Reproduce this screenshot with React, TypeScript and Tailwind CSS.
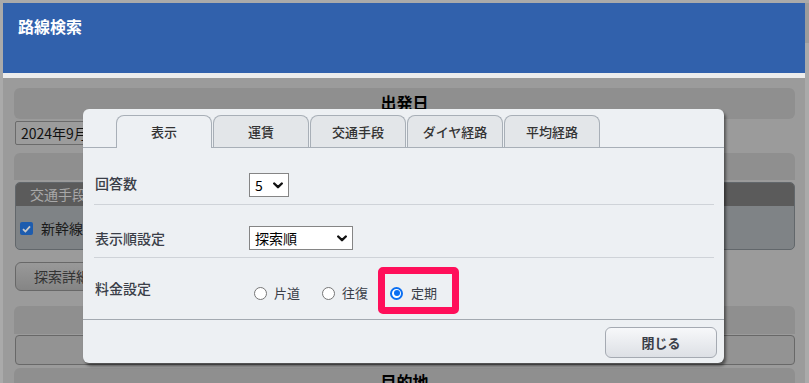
import React from "react";

function Chevron() {
  return (
    <svg width="10" height="7" viewBox="0 0 10 7" className="shrink-0">
      <polyline points="1.2,1.5 5,5.2 8.8,1.5" fill="none" stroke="#111" strokeWidth="2.4" strokeLinecap="round" strokeLinejoin="round" />
    </svg>
  );
}

function Select({ value, w }: { value: string; w: string }) {
  return (
    <div className={`${w} h-[24px] border border-[#858585] bg-white flex items-center justify-between pl-[5px] pr-[5px]`}>
      <span className="text-[14px] leading-none text-black">{value}</span>
      <Chevron />
    </div>
  );
}

function Radio({ checked }: { checked?: boolean }) {
  if (checked) {
    return (
      <span className="w-[13px] h-[13px] rounded-full border-[2px] border-[#0b6ff2] bg-white flex items-center justify-center shrink-0">
        <span className="w-[6px] h-[6px] rounded-full bg-[#0b6ff2]" />
      </span>
    );
  }
  return <span className="w-[13px] h-[13px] rounded-full border border-[#767676] bg-white shrink-0" />;
}

const tabs = ["表示", "運賃", "交通手段", "ダイヤ経路", "平均経路"];

export default function App() {
  return (
    <div className="relative w-[809px] h-[383px] overflow-hidden bg-[#aaaaaa] font-['Noto_Sans_CJK_JP','Noto_Sans',sans-serif] flex items-start">
      <div className="ml-[3px] mt-[3px] w-[802px] flex flex-col shrink-0">
        <div className="h-[70px] shrink-0 bg-[#3161ac] pl-[15px] pt-[11px]">
          <span className="text-white font-bold text-[16px] leading-[22px]">路線検索</span>
        </div>
        <div className="h-[5px] shrink-0 bg-[#ececec]" />
        <div className="h-[320px] shrink-0 bg-[#9b9b9b] pl-[11px] pr-[10px] pt-[10px] flex flex-col">
          <div className="h-[31px] shrink-0 rounded-[6px] bg-[#8f8f8f] flex items-center justify-center pb-[4px]">
            <span className="font-bold text-[16px] text-black">出発日</span>
          </div>
          <div className="mt-[2px] shrink-0 ml-[1px] w-[300px] h-[24px] border border-[#6b6b6b] rounded-[2px] bg-[#9c9c9c] flex items-center pl-[5px]">
            <span className="text-[14px] text-[#111]">2024年9月</span>
          </div>
          <div className="mt-[8px] shrink-0 h-[27px] rounded-t-[6px] bg-[#8f8f8f]" />
          <div className="mt-[2px] shrink-0 ml-[1px] h-[68px] rounded-[5px] border border-[#62676b] bg-[#7f8386] overflow-hidden flex flex-col">
            <div className="h-[23px] shrink-0 bg-[#5b5b5b] flex items-center pl-[14px]">
              <span className="text-[14px] text-[#a8a8a8]">交通手段</span>
            </div>
            <div className="flex items-center pl-[4px] pt-[12px]">
              <span className="w-[13px] h-[13px] rounded-[2px] bg-[#1d5cae] flex items-center justify-center">
                <svg width="9" height="8" viewBox="0 0 9 8">
                  <polyline points="1,4.2 3.4,6.5 8,1.3" fill="none" stroke="#c8c8c8" strokeWidth="1.8" />
                </svg>
              </span>
              <span className="ml-[8px] text-[14px] text-[#1a1a1a]">新幹線</span>
            </div>
          </div>
          <div className="mt-[12px] shrink-0 ml-[1px] w-[120px] h-[29px] rounded-[6px] border border-[#686868] bg-gradient-to-b from-[#999999] to-[#858585] flex items-center pl-[18px]">
            <span className="text-[14px] text-[#333]">探索詳細</span>
          </div>
          <div className="mt-[15px] shrink-0 h-[28px] rounded-t-[6px] bg-[#8f8f8f]" />
          <div className="mt-[1px] shrink-0 ml-[1px] h-[30px] rounded-[4px] border border-[#686868] bg-[#939393]" />
          <div className="mt-[3px] shrink-0 h-[30px] rounded-t-[6px] bg-[#8f8f8f] flex justify-center pt-[2px]">
            <span className="font-bold text-[16px] text-black leading-[22px]">目的地</span>
          </div>
        </div>
      </div>
      <div className="mt-[3px] w-[4px] h-[380px] shrink-0 flex flex-col">
        <div className="h-[40px] bg-[#9c9c9c]" />
        <div className="flex-1 bg-[#aaaaaa]" />
      </div>

      <div className="absolute left-[83px] top-[109px] w-[641px] h-[254px] rounded-[6px] bg-[#edf0f3] shadow-[2px_3px_3px_rgba(0,0,0,0.45)] flex flex-col">
        <div className="h-[39px] shrink-0 pt-[6px] pl-[33px] border-b border-[#a8afb7] flex items-start">
          {tabs.map((t, i) => (
            <div
              key={t}
              className={
                i === 0
                  ? "w-[96px] h-[33px] mr-[1px] rounded-t-[8px] border border-b-0 border-[#a8afb7] bg-[#edf0f3] flex items-center justify-center pb-[1px]"
                  : "w-[96px] h-[32px] mr-[1px] rounded-t-[8px] border border-b-0 border-[#a8afb7] bg-[#e3e6e9] flex items-center justify-center"
              }
            >
              <span className="text-[13px] font-medium text-[#333]">{t}</span>
            </div>
          ))}
        </div>
        <div className="ml-[11px] mr-[10px] flex flex-col shrink-0">
          <div className="pt-[25px] pb-[7px] border-b border-[#cfd3d8] flex items-center">
            <span className="w-[155px] pl-[1px] text-[14px] font-medium text-[#3a3e48] -mt-[3px]">回答数</span>
            <Select value="5" w="w-[40px]" />
          </div>
          <div className="pt-[21px] pb-[7px] border-b border-[#cfd3d8] flex items-center">
            <span className="w-[155px] pl-[1px] text-[14px] font-medium text-[#3a3e48]">表示順設定</span>
            <Select value="探索順" w="w-[104px]" />
          </div>
          <div className="pt-[9px] pb-[5px] flex items-start">
            <span className="w-[155px] pl-[1px] mt-[11px] text-[14px] font-medium leading-[20px] text-[#3a3e48]">料金設定</span>
            <div className="h-[47px] flex items-center">
              <div className="flex items-center mt-[5px] ml-[5px]">
                <Radio />
                <span className="ml-[7px] text-[13px] text-[#3a3e48]">片道</span>
              </div>
              <div className="flex items-center mt-[5px] ml-[22px]">
                <Radio />
                <span className="ml-[7px] text-[13px] text-[#3a3e48]">往復</span>
              </div>
              <div className="ml-[10px] w-[81px] h-[47px] rounded-[5px] border-[7px] border-[#ff0f5a] flex items-center pl-[5px] pt-[5px]">
                <Radio checked />
                <span className="ml-[8px] text-[13px] text-[#3a3e48]">定期</span>
              </div>
            </div>
          </div>
        </div>
        <div className="border-t border-[#a3a9b0] flex justify-end pt-[7px] pr-[7px] shrink-0">
          <div className="w-[112px] h-[31px] rounded-[6px] border border-[#a5aab2] bg-gradient-to-b from-[#f7f8fa] to-[#dde0e5] flex items-center justify-center">
            <span className="text-[13px] font-bold text-[#3a3e48]">閉じる</span>
          </div>
        </div>
      </div>
    </div>
  );
}
